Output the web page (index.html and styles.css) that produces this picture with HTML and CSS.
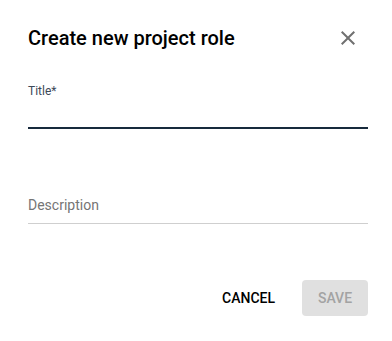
FILE: index.html
```html
<!DOCTYPE html>
<html lang="en">

<head>
    <meta charset="utf-8">
    <meta name="viewport" content="width=device-width, initial-scale=1.0">
    <title>Create new project role</title>
    <link rel="stylesheet" href="styles.css">
</head>

<body>
    <section class="dialog">
        <header class="dialog-head">
            <h1>Create new project role</h1>
            <button class="luk" aria-label="Close">
                <svg viewBox="0 0 24 24" width="24" height="24">
                    <path d="M19 6.41L17.59 5 12 10.59 6.41 5 5 6.41 10.59 12 5 17.59 6.41 19 12 13.41 17.59 19 19 17.59 13.41 12z"/>
                </svg>
            </button>
        </header>

        <div class="felt aktiv">
            <label for="titel">Title*</label>
            <input id="titel" type="text">
        </div>

        <div class="felt">
            <input id="beskrivelse" type="text" placeholder="Description">
        </div>

        <footer class="handlinger">
            <button class="knap">CANCEL</button>
            <button class="knap gem" disabled>SAVE</button>
        </footer>
    </section>
</body>

</html>
```

FILE: styles.css
```css
body {
    margin: 0;
    background-color: #ffffff;
    font-family: Roboto, 'Liberation Sans', sans-serif;
}

.dialog {
    padding: 22px 24px 0 28px;
}

.dialog-head {
    display: flex;
    align-items: center;
    justify-content: space-between;
    height: 32px;
}

h1 {
    margin: 0;
    font-size: 20px;
    font-weight: 500;
    line-height: 32px;
    color: #000000;
}

.luk {
    width: 24px;
    height: 24px;
    padding: 0;
    margin-right: 8px;
    border: none;
    background: none;
}

.luk svg {
    display: block;
    fill: #707070;
}

.felt {
    display: flex;
    flex-direction: column;
}

.felt label {
    margin-top: 29px;
    font-size: 12px;
    line-height: 16px;
    color: #3d4958;
}

.felt input {
    border: none;
    outline: none;
    padding: 0;
    font-family: inherit;
    background: none;
}

.aktiv input {
    height: 28px;
    border-bottom: 2px solid #172a3c;
}

#beskrivelse {
    margin-top: 66px;
    height: 20px;
    padding-bottom: 8px;
    font-size: 14px;
    line-height: 20px;
    border-bottom: 1px solid #cfcfcf;
}

#beskrivelse::placeholder {
    color: #757575;
}

.handlinger {
    display: flex;
    justify-content: flex-end;
    gap: 19px;
    margin-top: 56px;
}

.knap {
    height: 36px;
    padding: 0 8px;
    border: none;
    border-radius: 4px;
    background: none;
    font-family: inherit;
    font-size: 14px;
    font-weight: 500;
    color: #000000;
}

.gem {
    min-width: 66px;
    background-color: #e0e0e0;
    color: #a3a3a3;
}
```
